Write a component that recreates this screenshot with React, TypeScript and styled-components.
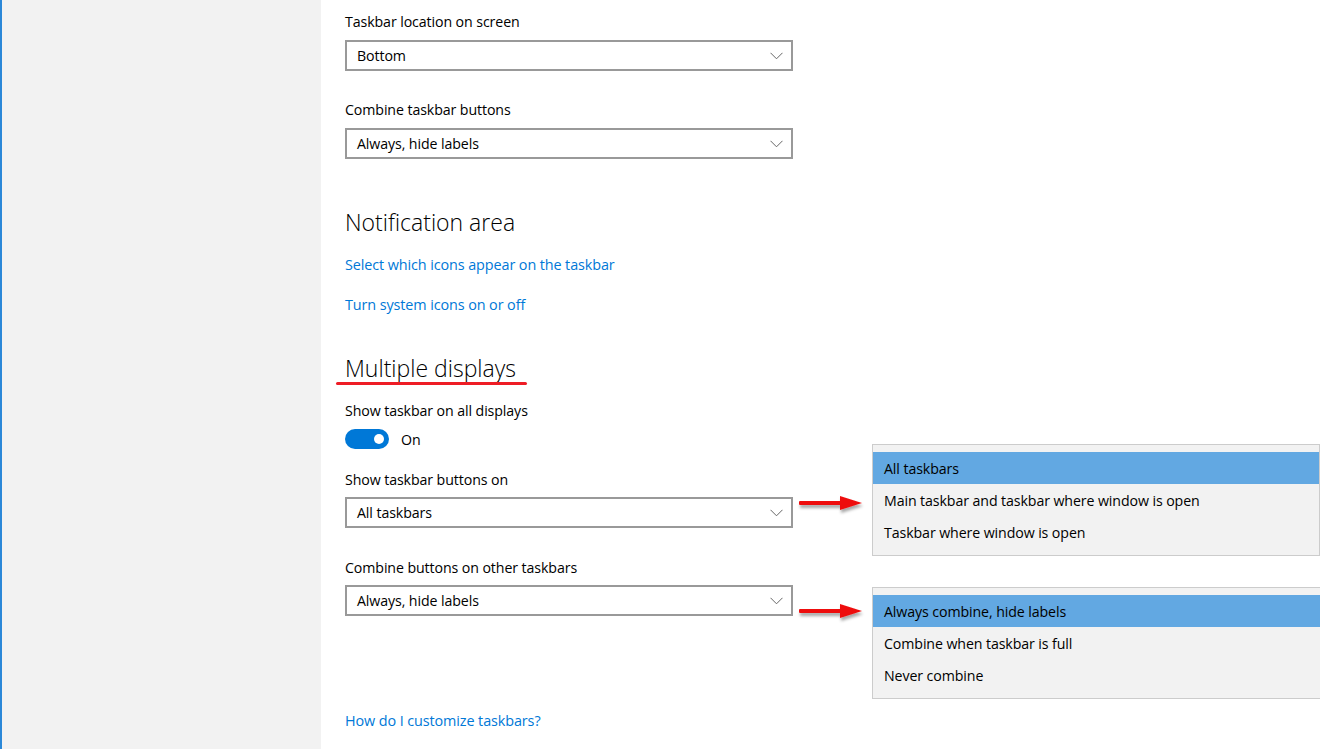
import React from "react";
import styled, { createGlobalStyle } from "styled-components";

const Global = createGlobalStyle`
  html, body { margin: 0; padding: 0; background: #fff; }
  body { font-family: "Open Sans", "Noto Sans", sans-serif; color: #000; }
  * { box-sizing: border-box; }
`;

const Page = styled.div`
  display: flex;
  width: 1331px;
  height: 749px;
  overflow: hidden;
`;

const Sidebar = styled.div`
  width: 321px;
  flex: none;
  background: #f2f2f2;
  border-left: 2px solid #2b88d8;
`;

const Main = styled.div`
  flex: 1;
  background: #fff;
  padding: 12px 0 0 24px;
  display: flex;
  flex-direction: column;
`;

const Label = styled.div<{ $mt?: number }>`
  font-size: 14.2px;
  line-height: 20px;
  margin-top: ${(p) => p.$mt ?? 0}px;
  letter-spacing: -0.1px;
`;

const SelectWrap = styled.div<{ $mt?: number }>`
  position: relative;
  margin-top: ${(p) => p.$mt ?? 8}px;
  width: 448px;
`;

const SelectBox = styled.div`
  height: 31px;
  border: 2px solid #999;
  display: flex;
  align-items: center;
  justify-content: space-between;
  padding: 0 8px 0 10px;
  font-size: 14.2px;
  letter-spacing: -0.1px;
  background: #fff;
`;

const Heading = styled.div<{ $mt: number }>`
  position: relative;
  font-size: 23px;
  font-weight: 300;
  line-height: 32px;
  margin-top: ${(p) => p.$mt}px;
  color: #000;
  align-self: flex-start;
`;

const Underline = styled.div`
  position: absolute;
  left: -9px;
  right: -11px;
  bottom: -1px;
  height: 3px;
  border-radius: 2px;
  background: #ee1c25;
`;

const Link = styled.a<{ $mt: number }>`
  display: block;
  color: #0078d7;
  font-size: 14.4px;
  line-height: 20px;
  text-decoration: none;
  margin-top: ${(p) => p.$mt}px;
  letter-spacing: -0.1px;
`;

const ToggleRow = styled.div`
  display: flex;
  align-items: center;
  gap: 12px;
  margin-top: 8px;
  font-size: 14.2px;
`;

const Toggle = styled.div`
  width: 44px;
  height: 20px;
  border-radius: 10px;
  background: #0078d7;
  position: relative;
`;

const Knob = styled.div`
  position: absolute;
  width: 10px;
  height: 10px;
  border-radius: 50%;
  background: #fff;
  top: 5px;
  right: 5px;
`;

const Popup = styled.div<{ $top: number; $noRight?: boolean }>`
  position: absolute;
  left: 527px;
  top: ${(p) => p.$top}px;
  width: 448px;
  background: #f2f2f2;
  border: 1px solid #cccccc;
  ${(p) => (p.$noRight ? "border-right: none;" : "")}
  padding: 7px 0 7px 0;
  display: flex;
  flex-direction: column;
`;

const Option = styled.div<{ $sel?: boolean }>`
  height: 32px;
  display: flex;
  align-items: center;
  padding-left: 11px;
  font-size: 14.2px;
  letter-spacing: -0.1px;
  background: ${(p) => (p.$sel ? "#62a8e2" : "transparent")};
  color: #000;
`;

const Arrow = styled.svg<{ $top: number }>`
  position: absolute;
  left: 453px;
  top: ${(p) => p.$top}px;
  overflow: visible;
`;

const Chevron = () => (
  <svg width="13" height="8" viewBox="0 0 13 8">
    <path d="M0.5 0.8 L6.5 6.8 L12.5 0.8" fill="none" stroke="#666" strokeWidth="1" />
  </svg>
);

const RedArrow = ({ top }: { top: number }) => (
  <Arrow $top={top} width="66" height="20" viewBox="0 0 66 20">
    <defs>
      <filter id={`sh${top}`} x="-20%" y="-50%" width="140%" height="200%">
        <feDropShadow dx="1" dy="3" stdDeviation="1.5" floodColor="#000" floodOpacity="0.35" />
      </filter>
    </defs>
    <g filter={`url(#sh${top})`}>
      <rect x="1" y="8" width="44" height="4" rx="1" fill="#ee1111" />
      <path d="M42 3 L64 10 L42 17 Z" fill="#ee1111" />
    </g>
  </Arrow>
);

export default function App() {
  return (
    <Page>
      <Global />
      <Sidebar />
      <Main>
        <Label>Taskbar location on screen</Label>
        <SelectWrap>
          <SelectBox>
            <span>Bottom</span>
            <Chevron />
          </SelectBox>
        </SelectWrap>
        <Label $mt={29}>Combine taskbar buttons</Label>
        <SelectWrap>
          <SelectBox>
            <span>Always, hide labels</span>
            <Chevron />
          </SelectBox>
        </SelectWrap>

        <Heading $mt={47}>Notification area</Heading>
        <Link $mt={17}>Select which icons appear on the taskbar</Link>
        <Link $mt={20}>Turn system icons on or off</Link>

        <Heading $mt={37}>
          Multiple displays
          <Underline />
        </Heading>
        <Label $mt={17}>Show taskbar on all displays</Label>
        <ToggleRow>
          <Toggle>
            <Knob />
          </Toggle>
          <span>On</span>
        </ToggleRow>

        <Label $mt={21}>Show taskbar buttons on</Label>
        <SelectWrap $mt={7}>
          <SelectBox>
            <span>All taskbars</span>
            <Chevron />
          </SelectBox>
          <RedArrow top={-4} />
          <Popup $top={-53}>
            <Option $sel>All taskbars</Option>
            <Option>Main taskbar and taskbar where window is open</Option>
            <Option>Taskbar where window is open</Option>
          </Popup>
        </SelectWrap>

        <Label $mt={30}>Combine buttons on other taskbars</Label>
        <SelectWrap $mt={7}>
          <SelectBox>
            <span>Always, hide labels</span>
            <Chevron />
          </SelectBox>
          <RedArrow top={16} />
          <Popup $top={2} $noRight>
            <Option $sel>Always combine, hide labels</Option>
            <Option>Combine when taskbar is full</Option>
            <Option>Never combine</Option>
          </Popup>
        </SelectWrap>

        <Link $mt={95}>How do I customize taskbars?</Link>
      </Main>
    </Page>
  );
}
